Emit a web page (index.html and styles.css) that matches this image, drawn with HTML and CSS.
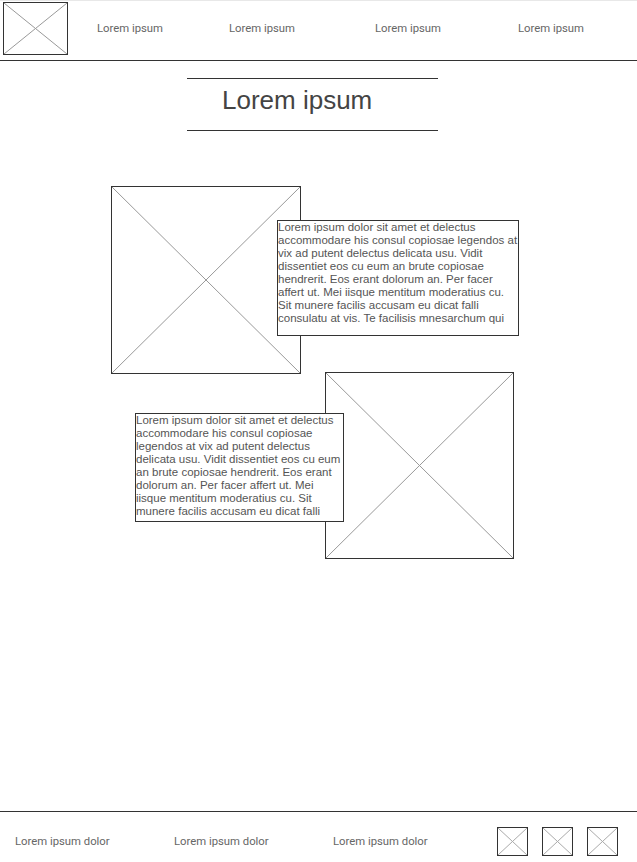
FILE: index.html
```html
<!DOCTYPE html>
<html lang="en">
<head>
  <meta charset="UTF-8" />
  <meta name="viewport" content="width=device-width, initial-scale=1.0"/>
  <title>Lorem ipsum</title>
  <link rel="stylesheet" href="styles.css">
</head>
<body>
  <div class="page">
    <!-- Header -->
    <div class="header">
      <div class="ph logo">
        <svg viewBox="0 0 100 100" preserveAspectRatio="none"><line x1="0" y1="0" x2="100" y2="100"/><line x1="100" y1="0" x2="0" y2="100"/></svg>
      </div>
      <div class="nav">
        <div class="nav-item">Lorem ipsum</div>
        <div class="nav-item">Lorem ipsum</div>
        <div class="nav-item">Lorem ipsum</div>
        <div class="nav-item">Lorem ipsum</div>
      </div>
    </div>

    <!-- Title -->
    <div class="title">Lorem ipsum</div>

    <!-- Content -->
    <div class="feature feature-one">
      <div class="ph pic pic-one">
        <svg viewBox="0 0 100 100" preserveAspectRatio="none"><line x1="0" y1="0" x2="100" y2="100"/><line x1="100" y1="0" x2="0" y2="100"/></svg>
      </div>
      <div class="note note-one">Lorem ipsum dolor sit amet et delectus accommodare his consul copiosae legendos at vix ad putent delectus delicata usu. Vidit dissentiet eos cu eum an brute copiosae hendrerit. Eos erant dolorum an. Per facer affert ut. Mei iisque mentitum moderatius cu. Sit munere facilis accusam eu dicat falli consulatu at vis. Te facilisis mnesarchum qui</div>
    </div>

    <div class="feature feature-two">
      <div class="note note-two">Lorem ipsum dolor sit amet et delectus accommodare his consul copiosae legendos at vix ad putent delectus delicata usu. Vidit dissentiet eos cu eum an brute copiosae hendrerit. Eos erant dolorum an. Per facer affert ut. Mei iisque mentitum moderatius cu. Sit munere facilis accusam eu dicat falli</div>
      <div class="ph pic pic-two">
        <svg viewBox="0 0 100 100" preserveAspectRatio="none"><line x1="0" y1="0" x2="100" y2="100"/><line x1="100" y1="0" x2="0" y2="100"/></svg>
      </div>
    </div>

    <!-- Footer -->
    <div class="footer">
      <div class="foot-item">Lorem ipsum dolor</div>
      <div class="foot-item">Lorem ipsum dolor</div>
      <div class="foot-item">Lorem ipsum dolor</div>
      <div class="icons">
        <div class="ph icon"><svg viewBox="0 0 100 100" preserveAspectRatio="none"><line x1="0" y1="0" x2="100" y2="100"/><line x1="100" y1="0" x2="0" y2="100"/></svg></div>
        <div class="ph icon"><svg viewBox="0 0 100 100" preserveAspectRatio="none"><line x1="0" y1="0" x2="100" y2="100"/><line x1="100" y1="0" x2="0" y2="100"/></svg></div>
        <div class="ph icon"><svg viewBox="0 0 100 100" preserveAspectRatio="none"><line x1="0" y1="0" x2="100" y2="100"/><line x1="100" y1="0" x2="0" y2="100"/></svg></div>
      </div>
    </div>
  </div>
</body>
</html>
```

FILE: styles.css
```css
body {
  margin: 0;
  font-family: Roboto, "Liberation Sans", sans-serif;
  background: white;
  color: #555;
}
.page {
  min-height: 862px;
  display: flex;
  flex-direction: column;
}
/* placeholder box with a cross */
.ph {
  box-sizing: border-box;
  border: 1px solid #333;
  background: white;
}
.ph svg {
  display: block;
  width: 100%;
  height: 100%;
}
.ph line {
  stroke: #999;
  stroke-width: 1;
  vector-effect: non-scaling-stroke;
}
.header {
  display: flex;
  align-items: center;
  border-top: 1px solid #e8e8e8;
  border-bottom: 1px solid #333;
  padding: 1px 0 5px 3px;
}
.logo {
  width: 65px;
  height: 53px;
}
.nav {
  display: grid;
  grid-template-columns: 132px 146px 143px auto;
  margin-left: 29px;
  font-size: 11.3px;
  color: #666;
}
.title {
  margin: 17px 0 0 187px;
  width: 251px;
  box-sizing: border-box;
  border-top: 1px solid #333;
  border-bottom: 1px solid #333;
  padding: 6px 0 15px 35px;
  font-family: "Liberation Sans", Arial, sans-serif;
  font-size: 26px;
  line-height: 30px;
  color: #444;
}
.feature {
  display: flex;
  align-items: flex-start;
}
.feature-one {
  margin-top: 55px;
  padding-left: 111px;
}
.feature-two {
  margin-top: -2px;
  padding-left: 135px;
}
.pic-one {
  width: 190px;
  height: 188px;
}
.pic-two {
  width: 189px;
  height: 187px;
  margin-left: -19px;
}
.note {
  position: relative;
  z-index: 1;
  box-sizing: border-box;
  border: 1px solid #333;
  background: white;
  overflow: hidden;
  font-family: "Liberation Sans", Arial, sans-serif;
  font-size: 11.5px;
  line-height: 13px;
  color: #555;
}
.note-one {
  width: 242px;
  height: 116px;
  margin: 34px 0 0 -24px;
}
.note-two {
  width: 209px;
  height: 109px;
  margin-top: 41px;
}
.footer {
  margin-top: auto;
  border-top: 1px solid #333;
  display: flex;
  align-items: center;
  padding: 15px 0 6px 15px;
  font-size: 11.3px;
  color: #666;
}
.foot-item {
  width: 159px;
}
.icons {
  display: flex;
  gap: 14px;
  margin-left: 5px;
}
.icon {
  width: 31px;
  height: 29px;
}
.icon line {
  stroke: #aaa;
}
```
